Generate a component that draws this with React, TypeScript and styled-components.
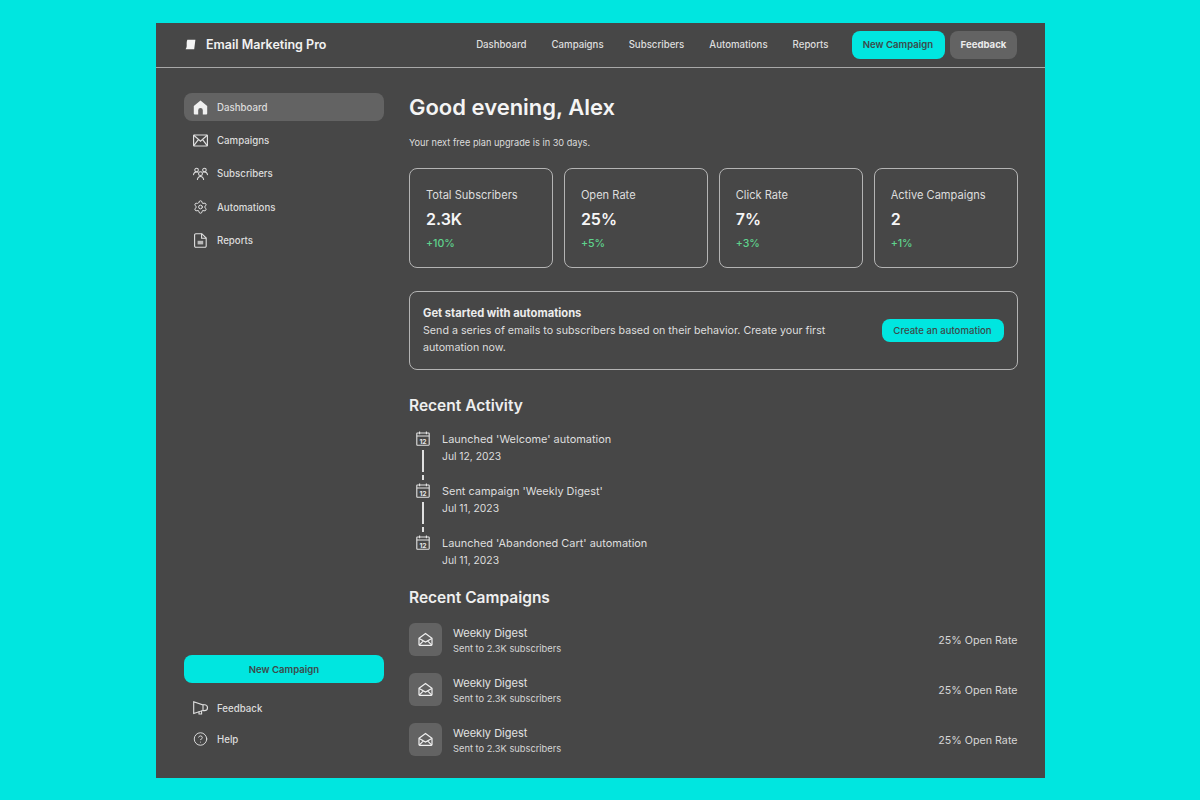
import React from 'react';
import styled, { createGlobalStyle } from 'styled-components';
import { Settings, CircleHelp } from 'lucide-react';

const GlobalStyle = createGlobalStyle`
  html, body {
    margin: 0;
    padding: 0;
    background: #00e6e0;
    font-family: Inter, "Noto Sans", "Liberation Sans", sans-serif;
  }
  * {
    box-sizing: border-box;
  }
  ul {
    list-style: none;
    margin: 0;
    padding: 0;
  }
`;

const Frame = styled.div`
  width: 889px;
  height: 755px;
  margin: 23px 0 22px 156px;
  background: #474747;
  display: flex;
  flex-direction: column;
  color: #e6e6e6;
`;

const Header = styled.header`
  height: 45px;
  flex: none;
  display: flex;
  align-items: center;
  padding: 0 28px 1px 29px;
  border-bottom: 1px solid #a8a8a8;
`;

const Brand = styled.div`
  display: flex;
  align-items: center;
  gap: 10px;
  font-size: 12.5px;
  font-weight: 600;
  color: #f2f2f2;
  margin-right: auto;
`;

const TopNav = styled.nav`
  display: flex;
  gap: 25px;
  margin-right: 23px;
`;

const TopLink = styled.a`
  font-size: 9.66px;
  font-weight: 500;
  color: #dedede;
`;

const TopActions = styled.div`
  display: flex;
  gap: 5.5px;
`;

const PrimaryButton = styled.button`
  height: 28px;
  width: 93px;
  border: 0;
  padding: 0;
  border-radius: 8px;
  background: #00e6e0;
  color: #3c4a4a;
  font: 600 9.6px Inter, sans-serif;
`;

const GreyButton = styled.button`
  height: 28px;
  width: 67px;
  border: 0;
  padding: 0;
  border-radius: 8px;
  background: #636363;
  color: #ececec;
  font: 700 9.6px Inter, sans-serif;
`;

const Body = styled.div`
  flex: 1;
  display: flex;
  min-height: 0;
`;

const Sidebar = styled.aside`
  width: 253px;
  flex: none;
  padding: 25px 25px 25px 28px;
  display: flex;
  flex-direction: column;
`;

const SideList = styled.ul`
  display: flex;
  flex-direction: column;
  gap: 5.4px;
`;

const SideItem = styled.li<{ $active?: boolean }>`
  height: 28px;
  display: flex;
  align-items: center;
  gap: 9px;
  padding-left: 9px;
  border-radius: 8px;
  font-size: 9.7px;
  font-weight: 500;
  color: #dcdcdc;
  background: ${(p) => (p.$active ? '#636363' : 'transparent')};
`;

const IconSlot = styled.span`
  width: 15px;
  height: 15px;
  flex: none;
  display: flex;
  align-items: center;
  justify-content: center;
  color: #e0e0e0;
`;

const SideFooter = styled.div`
  margin-top: auto;
  display: flex;
  flex-direction: column;
`;

const WideButton = styled(PrimaryButton)`
  width: 200px;
  margin-bottom: 11px;
`;

const FooterList = styled.ul`
  display: flex;
  flex-direction: column;
  gap: 3px;
`;

const Main = styled.main`
  flex: 1;
  min-width: 0;
  padding: 25px 27.5px 0 0;
`;

const Title = styled.h1`
  margin: 0;
  font-size: 22px;
  line-height: 28px;
  font-weight: 600;
  color: #f4f4f4;
`;

const Subtitle = styled.p`
  margin: 15px 0 0;
  font-size: 9.2px;
  line-height: 14px;
  color: #dcdcdc;
`;

const Stats = styled.div`
  display: grid;
  grid-template-columns: repeat(4, 1fr);
  gap: 11px;
  margin-top: 18px;
`;

const StatCard = styled.div`
  height: 100px;
  border: 1px solid #b4b4b4;
  border-radius: 8px;
  padding: 19px 16px 0;
`;

const StatLabel = styled.div`
  font-size: 11.1px;
  line-height: 15px;
  color: #dedede;
`;

const StatValue = styled.div`
  font-size: 16px;
  line-height: 22px;
  font-weight: 600;
  color: #f6f6f6;
  margin-top: 5px;
`;

const StatDelta = styled.div`
  font-size: 10.6px;
  line-height: 14px;
  font-weight: 500;
  color: #5fd38d;
  margin-top: 7px;
`;

const Promo = styled.section`
  height: 79px;
  margin-top: 23px;
  border: 1px solid #b4b4b4;
  border-radius: 8px;
  padding: 0 13px;
  display: flex;
  align-items: center;
  justify-content: space-between;
`;

const PromoTitle = styled.div`
  font-size: 11.2px;
  line-height: 17px;
  font-weight: 700;
  color: #ececec;
`;

const PromoText = styled.p`
  margin: 0;
  width: 420px;
  font-size: 10.7px;
  line-height: 17px;
  color: #dedede;
`;

const PromoButton = styled.button`
  width: 122px;
  height: 23px;
  flex: none;
  border: 0;
  padding: 0;
  border-radius: 8px;
  background: #00e6e0;
  color: #3c4a4a;
  font: 500 9.6px Inter, sans-serif;
`;

const SectionTitle = styled.h2<{ $top: number }>`
  margin: ${(p) => p.$top}px 0 0;
  font-size: 15.5px;
  line-height: 20px;
  font-weight: 600;
  color: #efefef;
`;

const Timeline = styled.ul`
  margin-top: 15px;
`;

const TimelineRow = styled.li`
  display: flex;
  height: 52px;
`;

const Rail = styled.div`
  width: 28px;
  margin-right: 5px;
  flex: none;
  display: flex;
  flex-direction: column;
  align-items: center;
`;

const RailLine = styled.span`
  width: 1.5px;
  height: 22px;
  margin-top: 4px;
  background: #e0e0e0;
`;

const RailDash = styled.span`
  width: 1.5px;
  height: 5px;
  margin-top: 3px;
  background: #e0e0e0;
`;

const ActivityName = styled.div`
  font-size: 10.95px;
  line-height: 17px;
  color: #dedede;
`;

const ActivityDate = styled.div`
  font-size: 10.3px;
  line-height: 17px;
  color: #dedede;
`;

const Campaigns = styled.ul`
  margin-top: 15px;
  display: flex;
  flex-direction: column;
  gap: 17px;
`;

const CampaignRow = styled.li`
  display: flex;
  align-items: center;
  height: 33px;
`;

const CampaignIcon = styled.span`
  width: 33px;
  height: 33px;
  border-radius: 6px;
  background: #636363;
  flex: none;
  display: flex;
  align-items: center;
  justify-content: center;
  margin-right: 11px;
  color: #f0f0f0;
`;

const CampaignInfo = styled.div`
  padding-top: 1px;
`;

const CampaignName = styled.div`
  font-size: 11px;
  line-height: 16px;
  color: #e2e2e2;
`;

const CampaignMeta = styled.div`
  font-size: 9.3px;
  line-height: 15px;
  color: #d6d6d6;
`;

const CampaignRate = styled.div`
  margin-left: auto;
  padding-top: 2px;
  font-size: 10.7px;
  color: #d6d6d6;
`;

const LogoIcon = () => (
  <svg width="11" height="11" viewBox="0 0 11 11">
    <path d="M2.4.8h8L9.2 10.2H.6c.8-1.2 1.1-2.4 1.1-4 0-2-.2-3.6.7-5.4z" fill="#f4f4f4" />
  </svg>
);

const HomeIcon = () => (
  <svg width="15" height="15" viewBox="0 0 15 15">
    <path
      d="M7.5.6 14.2 6v7.4a1 1 0 0 1-1 1H9.8V10.2a2.3 2.3 0 0 0-4.6 0v4.2H1.8a1 1 0 0 1-1-1V6z"
      fill="#f0f0f0"
    />
  </svg>
);

const MailIcon = () => (
  <svg width="15" height="13" viewBox="0 0 15 13" fill="none" stroke="currentColor" strokeWidth="1.2">
    <rect x=".6" y="1" width="13.8" height="11" rx=".5" />
    <path d="M.8 1.3 7.5 7.2l6.7-5.9M.8 11.7l4.6-6M14.2 11.7l-4.6-6" />
  </svg>
);

const UsersIcon = () => (
  <svg width="16" height="14" viewBox="0 0 16 14" fill="none" stroke="currentColor" strokeWidth="1.1">
    <circle cx="8" cy="6.6" r="2.1" />
    <path d="M4.6 13.4c.3-2.3 1.6-3.8 3.4-3.8s3.1 1.5 3.4 3.8" />
    <circle cx="3.8" cy="2.8" r="1.9" />
    <path d="M.5 8.2c.2-2 1.4-3.4 3.3-3.4.6 0 1.1.1 1.5.4" />
    <circle cx="12.2" cy="2.8" r="1.9" />
    <path d="M15.5 8.2c-.2-2-1.4-3.4-3.3-3.4-.6 0-1.1.1-1.5.4" />
  </svg>
);

const FileIcon = () => (
  <svg width="13" height="15" viewBox="0 0 13 15" fill="none" stroke="currentColor" strokeWidth="1.1">
    <path d="M1.8.7h6l4.4 4.4v8a1.2 1.2 0 0 1-1.2 1.2H1.8A1.2 1.2 0 0 1 .6 13.1V1.9A1.2 1.2 0 0 1 1.8.7z" />
    <path d="M7.6.8v4.4h4.5" />
    <rect x="3.6" y="7.8" width="5.6" height="3.6" fill="currentColor" stroke="none" opacity=".75" />
  </svg>
);

const MegaphoneIcon = () => (
  <svg width="15" height="14" viewBox="0 0 15 14" fill="none" stroke="currentColor" strokeWidth="1.1">
    <path d="M.7.8 10 4v5.4L.7 12.4z" />
    <path d="M10 3.8h1.6a2.9 2.9 0 0 1 0 5.8H10" />
    <path d="M6 10.6v2.4h2.6v-3.2" />
  </svg>
);

const CalendarIcon = () => (
  <svg width="14" height="15" viewBox="0 0 14 15" fill="none" stroke="#e4e4e4" strokeWidth="1.1">
    <rect x=".8" y="2" width="12.4" height="12.2" rx=".6" />
    <path d="M.8 5h12.4M3.6.6v2.6M10.4.6v2.6" />
    <text x="7" y="12.5" fontSize="6.8" fontWeight="700" fill="#e4e4e4" stroke="none" textAnchor="middle" fontFamily="Inter, sans-serif">
      12
    </text>
  </svg>
);

const OpenMailIcon = () => (
  <svg width="15" height="15" viewBox="0 0 15 15" fill="none" stroke="currentColor" strokeWidth="1.2">
    <path d="M1 6.2 7.5 1.4 14 6.2v6.4a.8.8 0 0 1-.8.8H1.8a.8.8 0 0 1-.8-.8z" />
    <path d="M1.2 6.4 7.5 10l6.3-3.6M1.2 13.2l4.2-4.4M13.8 13.2 9.6 8.8" />
  </svg>
);

const sideItems = [
  { label: 'Dashboard', icon: <HomeIcon />, active: true },
  { label: 'Campaigns', icon: <MailIcon /> },
  { label: 'Subscribers', icon: <UsersIcon /> },
  { label: 'Automations', icon: <Settings size={16} strokeWidth={1.6} /> },
  { label: 'Reports', icon: <FileIcon /> },
];

const stats = [
  { label: 'Total Subscribers', value: '2.3K', delta: '+10%' },
  { label: 'Open Rate', value: '25%', delta: '+5%' },
  { label: 'Click Rate', value: '7%', delta: '+3%' },
  { label: 'Active Campaigns', value: '2', delta: '+1%' },
];

const activity = [
  { text: "Launched 'Welcome' automation", date: 'Jul 12, 2023' },
  { text: "Sent campaign 'Weekly Digest'", date: 'Jul 11, 2023' },
  { text: "Launched 'Abandoned Cart' automation", date: 'Jul 11, 2023' },
];

const App: React.FC = () => {
  return (
    <>
      <GlobalStyle />
      <Frame>
        <Header>
          <Brand>
            <LogoIcon />
            Email Marketing Pro
          </Brand>
          <TopNav>
            {sideItems.map((item) => (
              <TopLink key={item.label}>{item.label}</TopLink>
            ))}
          </TopNav>
          <TopActions>
            <PrimaryButton>New Campaign</PrimaryButton>
            <GreyButton>Feedback</GreyButton>
          </TopActions>
        </Header>
        <Body>
          <Sidebar>
            <SideList>
              {sideItems.map((item) => (
                <SideItem key={item.label} $active={item.active}>
                  <IconSlot>{item.icon}</IconSlot>
                  {item.label}
                </SideItem>
              ))}
            </SideList>
            <SideFooter>
              <WideButton>New Campaign</WideButton>
              <FooterList>
                <SideItem>
                  <IconSlot>
                    <MegaphoneIcon />
                  </IconSlot>
                  Feedback
                </SideItem>
                <SideItem>
                  <IconSlot>
                    <CircleHelp size={16} strokeWidth={1.5} />
                  </IconSlot>
                  Help
                </SideItem>
              </FooterList>
            </SideFooter>
          </Sidebar>
          <Main>
            <Title>Good evening, Alex</Title>
            <Subtitle>Your next free plan upgrade is in 30 days.</Subtitle>
            <Stats>
              {stats.map((stat) => (
                <StatCard key={stat.label}>
                  <StatLabel>{stat.label}</StatLabel>
                  <StatValue>{stat.value}</StatValue>
                  <StatDelta>{stat.delta}</StatDelta>
                </StatCard>
              ))}
            </Stats>
            <Promo>
              <div>
                <PromoTitle>Get started with automations</PromoTitle>
                <PromoText>
                  Send a series of emails to subscribers based on their behavior. Create your first
                  automation now.
                </PromoText>
              </div>
              <PromoButton>Create an automation</PromoButton>
            </Promo>
            <SectionTitle $top={26}>Recent Activity</SectionTitle>
            <Timeline>
              {activity.map((item, i) => (
                <TimelineRow key={item.text}>
                  <Rail>
                    <CalendarIcon />
                    {i < activity.length - 1 && (
                      <>
                        <RailLine />
                        <RailDash />
                      </>
                    )}
                  </Rail>
                  <div>
                    <ActivityName>{item.text}</ActivityName>
                    <ActivityDate>{item.date}</ActivityDate>
                  </div>
                </TimelineRow>
              ))}
            </Timeline>
            <SectionTitle $top={1}>Recent Campaigns</SectionTitle>
            <Campaigns>
              {[0, 1, 2].map((i) => (
                <CampaignRow key={i}>
                  <CampaignIcon>
                    <OpenMailIcon />
                  </CampaignIcon>
                  <CampaignInfo>
                    <CampaignName>Weekly Digest</CampaignName>
                    <CampaignMeta>Sent to 2.3K subscribers</CampaignMeta>
                  </CampaignInfo>
                  <CampaignRate>25% Open Rate</CampaignRate>
                </CampaignRow>
              ))}
            </Campaigns>
          </Main>
        </Body>
      </Frame>
    </>
  );
};

export default App;
